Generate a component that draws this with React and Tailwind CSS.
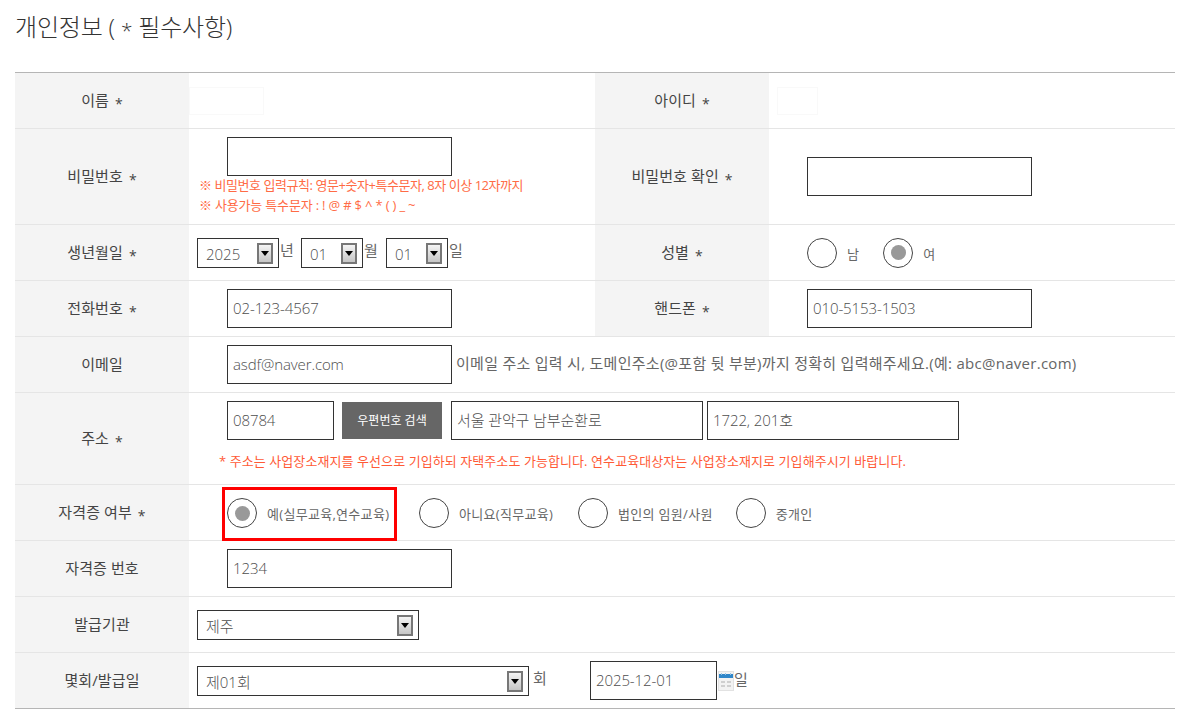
const font = { fontFamily: '"Open Sans", "Noto Sans CJK KR", sans-serif' };

function Star() {
  return <span className="ml-[6px] inline-block translate-y-[3px] text-[14px] leading-none font-normal">*</span>;
}

function Th({ children, star, last }) {
  return (
    <th
      className={`bg-[#f4f4f4] border-b pb-[1px] text-center align-middle text-[15px] font-normal tracking-[0.1px] text-[#444] ${
        last ? "border-[#b5b5b5]" : "border-[#e5e5e5]"
      }`}
    >
      {children}
      {star && <Star />}
    </th>
  );
}

function Td({ children, colSpan, className = "" }) {
  return (
    <td colSpan={colSpan} className={`border-b border-[#e5e5e5] align-middle ${className}`}>
      {children}
    </td>
  );
}

function Text({ w, value, className = "", h = "h-[39px]" }) {
  return (
    <input
      type="text"
      defaultValue={value}
      className={`block shrink-0 border border-[#333] bg-white pb-[2px] pl-[5px] text-[15px] font-light tracking-[-0.1px] text-[#4d4d4d] outline-none ${h} ${w} ${className}`}
    />
  );
}

function Select({ w, value }) {
  return (
    <div className={`relative shrink-0 h-[30px] ${w}`}>
      <select
        defaultValue={value}
        className="block h-full w-full appearance-none rounded-none border border-[#333] bg-white pl-[8px] pt-[3px] text-[15px] font-light text-[#4d4d4d] outline-none"
      >
        <option>{value}</option>
      </select>
      <span className="absolute right-[6px] top-[5px] flex h-[21px] w-[16px] items-center justify-center border-2 border-[#777] bg-linear-to-b from-[#f4f4f4] to-[#c6c6c6]">
        <span className="h-0 w-0 border-x-[4px] border-t-[5px] border-x-transparent border-t-black" />
      </span>
    </div>
  );
}

function Radio({ checked, label, className = "" }) {
  return (
    <label className={`flex items-center ${className}`}>
      <span className="flex h-[30px] w-[30px] shrink-0 items-center justify-center rounded-full border border-[#444] bg-white">
        {checked && <span className="h-[15px] w-[15px] rounded-full bg-[#999]" />}
      </span>
      <span className="ml-[10px] mt-[4px] whitespace-nowrap text-[13px] font-normal tracking-[0.3px] text-[#666]">
        {label}
      </span>
    </label>
  );
}

function Calendar() {
  return (
    <svg width="16" height="20" viewBox="0 0 16 20" className="ml-[1px] shrink-0">
      <rect x="0.5" y="0.5" width="15" height="19" fill="#f2f2f2" stroke="#e2e2e2" />
      <rect x="1" y="3" width="14" height="4" fill="#2f86c9" />
      <rect x="3" y="2" width="1" height="2" fill="#9cc6e6" />
      <rect x="7" y="2" width="1" height="2" fill="#9cc6e6" />
      <rect x="12" y="2" width="1" height="2" fill="#9cc6e6" />
      <rect x="3" y="10" width="4" height="2" fill="#cfcfcf" />
      <rect x="9" y="10" width="4" height="2" fill="#cfcfcf" />
      <rect x="3" y="14" width="4" height="2" fill="#cfcfcf" />
      <rect x="9" y="14" width="4" height="2" fill="#cfcfcf" />
    </svg>
  );
}

export default function App() {
  return (
    <div className="w-[1191px] h-[724px] overflow-hidden bg-white px-[15px]" style={font}>
      <h2 className="flex h-[54px] items-center whitespace-pre text-[24px] font-light leading-none tracking-[-0.2px] text-[#333]">
        개인정보 ( <span className="translate-y-[3px] text-[21px]">*</span> 필수사항)
      </h2>
      <table className="mt-[18px] w-[1160px] table-fixed border-separate border-spacing-0 border-t border-[#b5b5b5]">
        <colgroup>
          <col className="w-[174px]" />
          <col className="w-[406px]" />
          <col className="w-[174px]" />
          <col className="w-[406px]" />
        </colgroup>
        <tbody>
          <tr className="h-[56px]">
            <Th star>이름</Th>
            <Td>
              <div className="h-[28px] w-[75px] border border-[#f9f9f9]" />
            </Td>
            <Th star>아이디</Th>
            <Td className="pl-[8px]">
              <div className="h-[28px] w-[41px] border border-[#f9f9f9]" />
            </Td>
          </tr>
          <tr className="h-[96px]">
            <Th star>비밀번호</Th>
            <Td className="pl-[10px] pb-[1px]">
              <Text w="w-[225px]" value="" className="ml-[28px]" />
              <p className="mt-[-1px] text-[13px] font-normal leading-[20px] tracking-[-0.45px] text-[#ff6b45]">
                ※ 비밀번호 입력규칙: 영문+숫자+특수문자, 8자 이상 12자까지
              </p>
              <p className="text-[13px] font-normal leading-[20px] tracking-[-0.18px] text-[#ff6b45]">
                ※ 사용가능 특수문자 : ! @ # $ ^ * ( ) _ ~
              </p>
            </Td>
            <Th star>비밀번호 확인</Th>
            <Td className="pl-[38px]">
              <Text w="w-[225px]" value="" />
            </Td>
          </tr>
          <tr className="h-[56px]">
            <Th star>생년월일</Th>
            <Td className="pl-[8px]">
              <div className="flex items-center text-[15px] font-normal text-[#666]">
                <Select w="w-[82px]" value="2025" />
                <span className="ml-[1px] w-[21px] -translate-y-[2px]">년</span>
                <Select w="w-[62px]" value="01" />
                <span className="ml-[1px] w-[22px] -translate-y-[2px]">월</span>
                <Select w="w-[62px]" value="01" />
                <span className="ml-[1px] -translate-y-[2px]">일</span>
              </div>
            </Td>
            <Th star>성별</Th>
            <Td className="pl-[38px]">
              <div className="flex items-center">
                <Radio label="남" />
                <Radio checked label="여" className="ml-[24px]" />
              </div>
            </Td>
          </tr>
          <tr className="h-[56px]">
            <Th star>전화번호</Th>
            <Td className="pl-[38px]">
              <Text w="w-[225px]" value="02-123-4567" />
            </Td>
            <Th star>핸드폰</Th>
            <Td className="pl-[38px]">
              <Text w="w-[225px]" value="010-5153-1503" />
            </Td>
          </tr>
          <tr className="h-[56px]">
            <Th>이메일</Th>
            <Td colSpan={3} className="pl-[38px]">
              <div className="flex items-center text-[15px] font-normal text-[#666]">
                <Text w="w-[225px]" value="asdf@naver.com" />
                <span className="ml-[4px] -translate-y-[1px] whitespace-nowrap tracking-[0.28px]">
                  이메일 주소 입력 시, 도메인주소(@포함 뒷 부분)까지 정확히 입력해주세요.(예: abc@naver.com)
                </span>
              </div>
            </Td>
          </tr>
          <tr className="h-[92px]">
            <Th star>주소</Th>
            <Td colSpan={3} className="pl-[30px] pb-[5px]">
              <div className="ml-[8px] flex items-center">
                <Text w="w-[107px]" value="08784" />
                <button className="ml-[8px] h-[37px] w-[100px] shrink-0 bg-[#666] text-[12px] font-normal text-white">
                  우편번호 검색
                </button>
                <Text w="w-[252px]" value="서울 관악구 남부순환로" className="ml-[9px]" />
                <Text w="w-[252px]" value="1722, 201호" className="ml-[4px]" />
              </div>
              <p className="mt-[11px] whitespace-nowrap text-[13px] font-normal leading-[20px] tracking-[0.08px] text-[#ff5a36]">
                * 주소는 사업장소재지를 우선으로 기입하되 자택주소도 가능합니다. 연수교육대상자는 사업장소재지로 기입해주시기 바랍니다.
              </p>
            </Td>
          </tr>
          <tr className="h-[56px]">
            <Th star>자격증 여부</Th>
            <Td colSpan={3} className="pl-[33px]">
              <div className="flex items-center">
                <div className="mt-[2px] mb-[-1px] flex h-[54px] w-[175px] items-center border-[3px] border-[#f00] pb-[2px] pl-[2px]">
                  <Radio checked label="예(실무교육,연수교육)" />
                </div>
                <Radio label="아니요(직무교육)" className="ml-[22px]" />
                <Radio label="법인의 임원/사원" className="ml-[25px]" />
                <Radio label="중개인" className="ml-[23px]" />
              </div>
            </Td>
          </tr>
          <tr className="h-[56px]">
            <Th>자격증 번호</Th>
            <Td colSpan={3} className="pl-[38px]">
              <Text w="w-[225px]" value="1234" />
            </Td>
          </tr>
          <tr className="h-[56px]">
            <Th>발급기관</Th>
            <Td colSpan={3} className="pl-[8px]">
              <Select w="w-[222px]" value="제주" />
            </Td>
          </tr>
          <tr className="h-[56px]">
            <Th last>몇회/발급일</Th>
            <td colSpan={3} className="border-b border-[#b5b5b5] pl-[8px] align-middle">
              <div className="flex items-center text-[15px] font-normal text-[#666]">
                <Select w="w-[332px]" value="제01회" />
                <span className="ml-[4px] w-[15px] -translate-y-[2px]">회</span>
                <Text w="w-[127px]" value="2025-12-01" className="ml-[42px]" />
                <Calendar />
                <span className="-translate-y-[1px]">일</span>
              </div>
            </td>
          </tr>
        </tbody>
      </table>
    </div>
  );
}
